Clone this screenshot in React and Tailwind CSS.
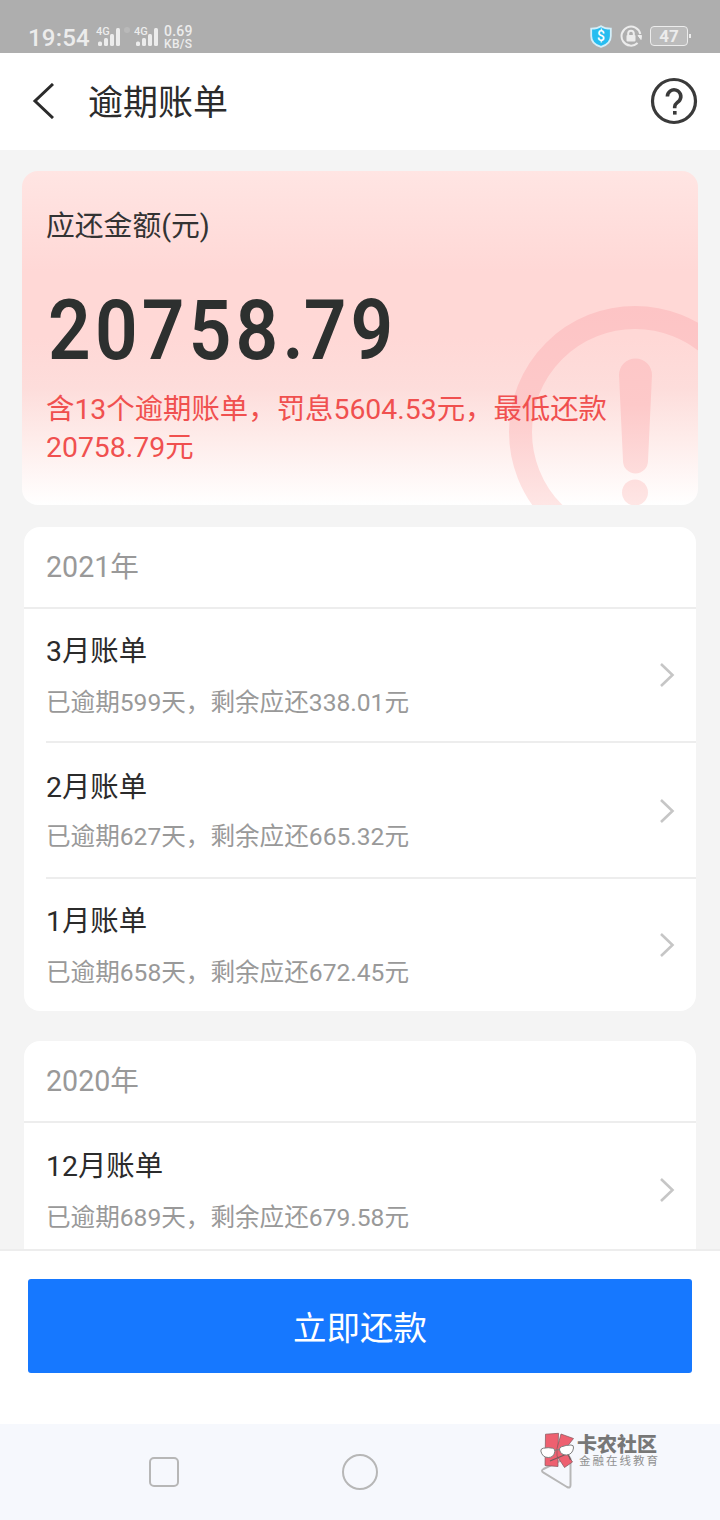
const years = [
  {
    year: '2021年',
    bills: [
      { month: '3月账单', info: '已逾期599天，剩余应还338.01元', box: 'h-[132px] pt-[22px]', gap: 'mt-[9px]' },
      { month: '2月账单', info: '已逾期627天，剩余应还665.32元', box: 'h-[134px] pt-[24px]', gap: 'mt-[7px]' },
      { month: '1月账单', info: '已逾期658天，剩余应还672.45元', box: 'h-[132px] pt-[22px]', gap: 'mt-[9px]' },
    ],
  },
  {
    year: '2020年',
    bills: [
      { month: '12月账单', info: '已逾期689天，剩余应还679.58元', box: 'h-[154px] pt-[23px]', gap: 'mt-[9px]' },
    ],
  },
]

function Signal() {
  return (
    <svg className="w-6 h-[22px]" viewBox="0 0 24 22">
      <g fill="#ececec">
        <rect x="2" y="15.500" width="4" height="4.500" rx="1.500" />
        <rect x="8" y="12" width="4" height="8" rx="1.500" />
        <rect x="14" y="8" width="4" height="12" rx="1.500" />
        <rect x="20" y="2" width="4" height="18" rx="1.500" />
      </g>
      <text x="0" y="9" fontSize="11" fontWeight="500" fill="#ececec">4G</text>
    </svg>
  )
}

function StatusBar() {
  return (
    <header className="h-[53px] shrink-0 bg-[#aeaeae] flex items-start justify-between pl-7 pr-[29px] pt-6 text-[#ececec]">
      <div className="flex">
        <span className="w-[68px] text-[24px] leading-[28px] font-medium tracking-[0.2px]">19:54</span>
        <div className="pt-[2px]"><Signal /></div>
        <span className="w-[6px] h-[6px] rounded-full bg-[#b9b9b9] mt-[3px] ml-1 mr-1" />
        <div className="pt-[2px]"><Signal /></div>
        <div className="ml-[6px] text-[13px] font-medium leading-[13px] pt-[1px]">
          <div className="tracking-[0.2px] text-[14px]">0.69</div>
          <div className="text-[12px] tracking-[0.3px]">KB/S</div>
        </div>
      </div>
      <div className="flex items-start">
        <svg className="w-[22px] h-[23px] mt-px" viewBox="0 0 22 23">
          <path d="M11 1.2 C8 3.2 4.800 3.600 1.200 3.600 V11 C1.200 16.500 5 20.200 11 21.900 C17 20.200 20.800 16.500 20.800 11 V3.600 C17.200 3.600 14 3.200 11 1.200Z" fill="#27bdf0" stroke="#d3effa" strokeWidth="1.800" />
          <text x="11" y="16" fontSize="14" fontWeight="500" fill="#fff" textAnchor="middle">$</text>
        </svg>
        <svg className="w-[22px] h-[22px] ml-2 mt-px" viewBox="0 0 22 22" fill="none" stroke="#ececec">
          <path d="M17.600 18 A9.500 9.500 0 1 1 20.300 9" strokeWidth="2" />
          <path d="M18 10.500h3.500l-0.500 4z" fill="#ececec" strokeWidth="1" />
          <path d="M8.200 10V8.500a2.800 2.800 0 0 1 5.600 0v1.500" strokeWidth="2" />
          <rect x="6.500" y="10" width="9" height="6.500" rx="1" fill="#ececec" stroke="none" />
        </svg>
        <div className="ml-2 mt-[2px] w-[38px] h-[20px] border border-[#ececec] rounded-[4px] bg-[#bcbcbc] flex items-center justify-center text-[17px] leading-none font-bold pt-px">47</div>
        <span className="w-[2px] h-[4px] bg-[#ececec] mt-[10px] ml-px" />
      </div>
    </header>
  )
}

function TitleBar() {
  return (
    <div className="h-[97px] shrink-0 bg-white flex items-center pl-[32px] pr-[22px] pb-[2px]">
      <svg className="w-[22px] h-[36px]" viewBox="0 0 22 36" fill="none" stroke="#2b2b2b" strokeWidth="3">
        <path d="M21 1L3 18l18 17" />
      </svg>
      <h1 className="ml-[34px] pt-[6px] text-[35px] leading-[48px] text-[#2b2b2b] flex-1">逾期账单</h1>
      <svg className="w-[48px] h-[48px]" viewBox="0 0 48 48" fill="none" stroke="#3a3a3a">
        <circle cx="24" cy="24" r="21.500" strokeWidth="3.200" />
        <path d="M17.400 19.500a6.700 6.700 0 1 1 12.300 3.700c-1.700 2.500-5 3.300-5 6.600v1.400" strokeWidth="3.600" />
        <rect x="23" y="34" width="3.600" height="3.600" fill="#3a3a3a" stroke="none" />
      </svg>
    </div>
  )
}

function AmountCard() {
  return (
    <section className="relative overflow-hidden h-[334px] shrink-0 mt-[21px] mx-[22px] rounded-[16px] bg-[linear-gradient(to_bottom,#ffe5e3_0%,#ffd8d6_30%,#ffd8d6_50%,#fddddb_65%,#feecea_80%,#fff_100%)] px-[24px] pt-[35px]">
      <svg className="absolute right-0 bottom-0 w-[190px] h-[200px]" viewBox="0 0 190 200">
        <defs>
          <linearGradient id="mark" x1="0" y1="0" x2="0" y2="200" gradientUnits="userSpaceOnUse">
            <stop offset="0" stopColor="#fdc4c5" />
            <stop offset="0.5" stopColor="#fdc9c9" />
            <stop offset="1" stopColor="#fee6e5" />
          </linearGradient>
        </defs>
        <circle cx="127" cy="127" r="114.500" fill="none" stroke="url(#mark)" strokeWidth="23" />
        <path d="M111 70a16.500 16.500 0 0 1 33 0l-4 86a12.500 12.500 0 0 1 -25 0z" fill="url(#mark)" />
        <circle cx="127" cy="187.500" r="13" fill="url(#mark)" />
      </svg>
      <div className="relative">
        <p className="text-[28.800px] leading-[40px] text-[#333]">应还金额(元)</p>
        <p className="mt-[35px] ml-[2px] text-[84px] leading-[100px] font-semibold tracking-[4.700px] origin-left scale-x-[0.890] text-[#2d302f] whitespace-nowrap">
          20758<span className="tracking-[0px]">.</span>79
        </p>
        <p className="mt-[10px] text-[28.400px] leading-[38px] text-[#f0504f] whitespace-nowrap">
          含13个逾期账单，罚息5604.53元，最低还款<br />20758.79元
        </p>
      </div>
    </section>
  )
}

function BillRow({ bill, last }) {
  return (
    <li className={last ? 'ml-[22px]' : 'ml-[22px] border-b-2 border-[#ededed]'}>
      <div className={`flex justify-between ${bill.box}`}>
        <div>
          <p className="text-[28.400px] leading-[42px] text-[#2b2b2b]">{bill.month}</p>
          <p className={`text-[24.600px] leading-[42px] text-[#999] ${bill.gap}`}>{bill.info}</p>
        </div>
        <svg className="w-4 h-[26px] mr-[21px] mt-[31px]" viewBox="0 0 16 26" fill="none" stroke="#c6c6c6" strokeWidth="2.600">
          <path d="M2 2l11.500 11L2 24" />
        </svg>
      </div>
    </li>
  )
}

function YearCard({ item, className }) {
  return (
    <section className={`mx-6 bg-white rounded-[16px] shrink-0 ${className}`}>
      <h2 className="h-[82px] border-b-2 border-[#ededed] pl-[22px] text-[28.600px] leading-[81px] text-[#999]">{item.year}</h2>
      <ul>
        {item.bills.map((bill, i) => (
          <BillRow key={bill.month} bill={bill} last={i === item.bills.length - 1} />
        ))}
      </ul>
    </section>
  )
}

function NavBar() {
  return (
    <nav className="relative h-[96px] shrink-0 bg-[#f6f8fd] flex items-center justify-between pl-[149px] pr-[148px]">
      <span className="w-[30px] h-[30px] rounded-[5px] border-2 border-[#b7b7b7]" />
      <span className="w-[36px] h-[36px] rounded-full border-2 border-[#b7b7b7] ml-px" />
      <svg className="w-[32px] h-[36px]" viewBox="0 0 32 36" fill="none" stroke="#b7b7b7" strokeWidth="2">
        <path d="M27.500 3 L3.500 15 Q0.500 16.800 3.500 18.600 L27 33 Q30.500 34.800 30.500 31 V5 Q30 2 27.500 3" />
      </svg>
      {/* community badge over the back key */}
      <div className="absolute left-[540px] top-[8px] flex">
        <svg className="w-[36px] h-[37px]" viewBox="0 0 36 37">
          <g fill="#ee6070" stroke="#80585d" strokeWidth="0.700">
            <path d="M5.500 2.200L18.500 1.300 18 18 18 34.500 5 33.500z" />
            <path d="M21 2L33.500 6.500 24.500 18 32.500 30 24.500 35.500 17 24V16.500z" />
          </g>
          <path d="M10 29L28 21.500 30.500 28" fill="none" stroke="#76595c" strokeWidth="1.200" />
          <path d="M0.800 19q0-2.500 2.500-2.800 5-1 9.500 0 2.500 0.800 2 3.500-1 5.800-6.500 5.800-6 0-7.500-6.500z" fill="#fff" stroke="#7f7f7f" strokeWidth="1" />
          <path d="M19.500 18q-0.500-2.500 2-3.200 4.500-1.800 9.500-1.800 3 0 2.500 3-1 6.500-7 7-5.500 0.200-7-5z" fill="#fff" stroke="#7f7f7f" strokeWidth="1" />
          <path d="M14.800 18.500q2.500-1.500 4.700-0.500" fill="none" stroke="#7f7f7f" strokeWidth="1" />
        </svg>
        <div className="ml-[1px]">
          <div className="text-[20px] leading-[26px] font-black text-[#777]">卡农社区</div>
          <div className="ml-[2px] mt-[-4px] text-[11.500px] leading-[14px] tracking-[2px] text-[#909090]">金融在线教育</div>
        </div>
      </div>
    </nav>
  )
}

export default function App() {
  return (
    <div className="w-[720px] h-[1520px] flex flex-col overflow-hidden bg-[#f4f4f4] font-[Roboto,'Noto_Sans_CJK_SC',sans-serif]">
      <StatusBar />
      <TitleBar />
      <main className="flex-1 min-h-0 overflow-hidden flex flex-col">
        <AmountCard />
        <YearCard item={years[0]} className="mt-[22px]" />
        <YearCard item={years[1]} className="mt-[30px]" />
      </main>
      <footer className="h-[175px] shrink-0 bg-white border-t-2 border-[#ededed] px-7 pt-7">
        <button className="w-full h-[94px] rounded-[3px] bg-[#1678ff] text-white text-[33.500px] leading-[94px] pt-[3px]">立即还款</button>
      </footer>
      <NavBar />
    </div>
  )
}
